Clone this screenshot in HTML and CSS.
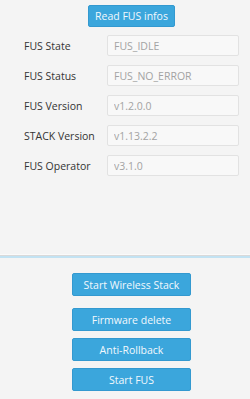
FILE: index.html
```html
<!DOCTYPE html>
<html lang="en">
<head>
    <meta charset="UTF-8">
    <title>FUS</title>
    <link rel="stylesheet" href="styles.css">
</head>
<body>

<div class="top">
    <div class="center">
        <button class="btn btn-read">Read FUS infos</button>
    </div>

    <div class="infos">
        <label class="info-label">FUS State</label>
        <input class="info-value" type="text" value="FUS_IDLE" disabled>

        <label class="info-label">FUS Status</label>
        <input class="info-value" type="text" value="FUS_NO_ERROR" disabled>

        <label class="info-label">FUS Version</label>
        <input class="info-value" type="text" value="v1.2.0.0" disabled>

        <label class="info-label">STACK Version</label>
        <input class="info-value" type="text" value="v1.13.2.2" disabled>

        <label class="info-label">FUS Operator</label>
        <input class="info-value" type="text" value="v3.1.0" disabled>
    </div>
</div>

<div class="separator"></div>

<div class="actions">
    <button class="btn btn-action btn-first">Start Wireless Stack</button>
    <button class="btn btn-action">Firmware delete</button>
    <button class="btn btn-action">Anti-Rollback</button>
    <button class="btn btn-action">Start FUS</button>
</div>

</body>
</html>
```

FILE: styles.css
```css
body {
    margin: 0;
    background-color: #f4f4f4;
    font-family: "Open Sans", "Noto Sans", sans-serif;
    font-size: 10.5px;
    color: #333333;
}

.top {
    height: 254px;
    padding-top: 5px;
    box-sizing: border-box;
}

.center {
    display: flex;
    justify-content: center;
    padding-left: 13px;
}

.btn {
    font-family: "Open Sans", "Noto Sans", sans-serif;
    font-size: 10.5px;
    color: #f2f8fc;
    background-color: #3ba6dc;
    border: 1px solid #3399d0;
    border-radius: 2px;
    padding: 0;
    cursor: pointer;
}

.btn-read {
    width: 87px;
    height: 22px;
}

.infos {
    display: grid;
    grid-template-columns: 83px 132px;
    row-gap: 9px;
    align-items: center;
    margin-top: 8px;
    padding-left: 24px;
}

.info-label {
    font-size: 10.5px;
    color: #333333;
}

.info-value {
    box-sizing: border-box;
    width: 132px;
    height: 21px;
    padding: 0 6px;
    font-family: "Open Sans", "Noto Sans", sans-serif;
    font-size: 10.5px;
    color: #a3a3a3;
    background-color: #f8f8f8;
    border: 1px solid #e2e2e2;
    border-radius: 2px;
}

.separator {
    height: 1px;
    background-color: #d9d9d9;
    border-top: 1px solid #fafafa;
    border-bottom: 2px solid #c2e2f2;
}

.actions {
    display: flex;
    flex-direction: column;
    align-items: center;
    gap: 7px;
    padding-left: 13px;
    padding-top: 15px;
}

.btn-action {
    width: 119px;
    height: 23px;
}

.btn-first {
    margin-bottom: 5px;
}
```
